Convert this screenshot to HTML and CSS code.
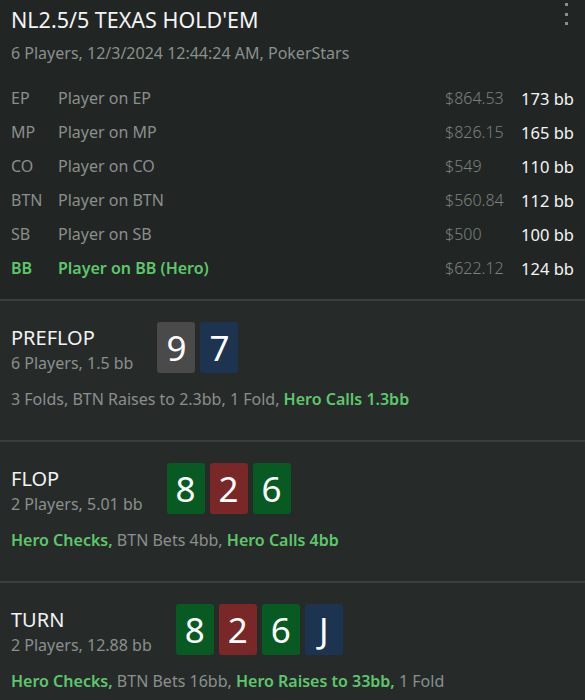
FILE: index.html
```html
<!DOCTYPE html>
<html lang="en">
<head>
  <meta charset="UTF-8">
  <meta name="viewport" content="width=device-width, initial-scale=1.0">
  <title>Hand History</title>
  <link rel="stylesheet" href="styles.css">
</head>
<body>
  <div class="hand">
    <div class="header">
      <button class="menu" aria-label="More">
        <span></span><span></span><span></span>
      </button>
      <h1>NL2.5/5 TEXAS HOLD'EM</h1>
      <p class="meta">6 Players, 12/3/2024 12:44:24 AM, PokerStars</p>

      <div class="players">
        <div class="player"><span class="pos">EP</span><span class="name">Player on EP</span><span class="cash">$864.53</span><span class="bb">173 bb</span></div>
        <div class="player"><span class="pos">MP</span><span class="name">Player on MP</span><span class="cash">$826.15</span><span class="bb">165 bb</span></div>
        <div class="player"><span class="pos">CO</span><span class="name">Player on CO</span><span class="cash">$549</span><span class="bb">110 bb</span></div>
        <div class="player"><span class="pos">BTN</span><span class="name">Player on BTN</span><span class="cash">$560.84</span><span class="bb">112 bb</span></div>
        <div class="player"><span class="pos">SB</span><span class="name">Player on SB</span><span class="cash">$500</span><span class="bb">100 bb</span></div>
        <div class="player hero"><span class="pos">BB</span><span class="name">Player on BB (Hero)</span><span class="cash">$622.12</span><span class="bb">124 bb</span></div>
      </div>
    </div>

    <div class="street">
      <div class="street-top">
        <div class="street-info">
          <h2>PREFLOP</h2>
          <p class="meta">6 Players, 1.5 bb</p>
        </div>
        <div class="cards">
          <span class="card grey">9</span>
          <span class="card blue">7</span>
        </div>
      </div>
      <p class="actions">3 Folds, BTN Raises to 2.3bb, 1 Fold, <b>Hero Calls 1.3bb</b></p>
    </div>

    <div class="street">
      <div class="street-top">
        <div class="street-info">
          <h2>FLOP</h2>
          <p class="meta">2 Players, 5.01 bb</p>
        </div>
        <div class="cards">
          <span class="card green">8</span>
          <span class="card red">2</span>
          <span class="card green">6</span>
        </div>
      </div>
      <p class="actions"><b>Hero Checks,</b> BTN Bets 4bb, <b>Hero Calls 4bb</b></p>
    </div>

    <div class="street">
      <div class="street-top">
        <div class="street-info">
          <h2>TURN</h2>
          <p class="meta">2 Players, 12.88 bb</p>
        </div>
        <div class="cards">
          <span class="card green">8</span>
          <span class="card red">2</span>
          <span class="card green">6</span>
          <span class="card blue">J</span>
        </div>
      </div>
      <p class="actions"><b>Hero Checks,</b> BTN Bets 16bb, <b>Hero Raises to 33bb,</b> 1 Fold</p>
    </div>
  </div>
</body>
</html>
```

FILE: styles.css
```css
body {
  margin: 0;
  padding: 0;
  font-family: "Noto Sans", "Open Sans", sans-serif;
  background-color: #212624;
  color: #f2f2f2;
  overflow: hidden;
}

.hand {
  width: 585px;
}

.header {
  position: relative;
  padding: 5px 11px 14px 11px;
  border-bottom: 2px solid #3a3f3e;
}

.menu {
  position: absolute;
  top: 3px;
  right: 15px;
  width: 8px;
  height: 22px;
  padding: 0;
  border: none;
  background: none;
  display: flex;
  flex-direction: column;
  align-items: center;
  justify-content: space-between;
}

.menu span {
  width: 3px;
  height: 3px;
  background-color: #8a8d8c;
}

h1 {
  margin: 0;
  font-size: 21.5px;
  font-weight: normal;
  line-height: 30px;
  color: #f4f4f4;
}

.meta {
  margin: 0;
  font-size: 16px;
  color: #8b8f8d;
}

.header .meta {
  margin-top: 4px;
  line-height: 28px;
}

.players {
  margin-top: 14px;
}

.player {
  display: flex;
  align-items: center;
  height: 34px;
  font-size: 16px;
  color: #8b8f8d;
}

.pos {
  width: 47px;
}

.name {
  flex: 1;
}

.cash {
  width: 75px;
  font-weight: 300;
  color: #7c807e;
}

.bb {
  width: 54px;
  text-align: right;
  font-size: 16.5px;
  color: #f4f4f4;
}

.player.hero .pos,
.player.hero .name {
  color: #5ec66b;
  font-weight: 600;
}

.street {
  height: 141px;
  padding: 0 11px;
  background-color: #262b2a;
  border-bottom: 2px solid #3a3f3e;
  box-sizing: border-box;
}

.street-top {
  display: flex;
  align-items: flex-start;
  gap: 24px;
  padding-top: 21px;
}

.street-info {
  padding-top: 3px;
}

h2 {
  margin: 0;
  font-size: 20px;
  font-weight: normal;
  line-height: 26px;
  color: #f2f2f2;
}

.street .meta {
  line-height: 24px;
}

.cards {
  display: flex;
  gap: 5px;
}

.card {
  width: 38px;
  height: 51px;
  border-radius: 3px;
  display: flex;
  align-items: center;
  justify-content: center;
  font-size: 35px;
  color: #ffffff;
}

.card.grey {
  background-color: #4a4a4a;
}

.card.blue {
  background-color: #1c3450;
}

.card.green {
  background-color: #075a22;
}

.card.red {
  background-color: #792727;
}

.actions {
  margin: 13px 0 0 0;
  font-size: 16px;
  color: #8b8f8d;
}

.actions b {
  color: #5ec66b;
  font-weight: 600;
}
```
